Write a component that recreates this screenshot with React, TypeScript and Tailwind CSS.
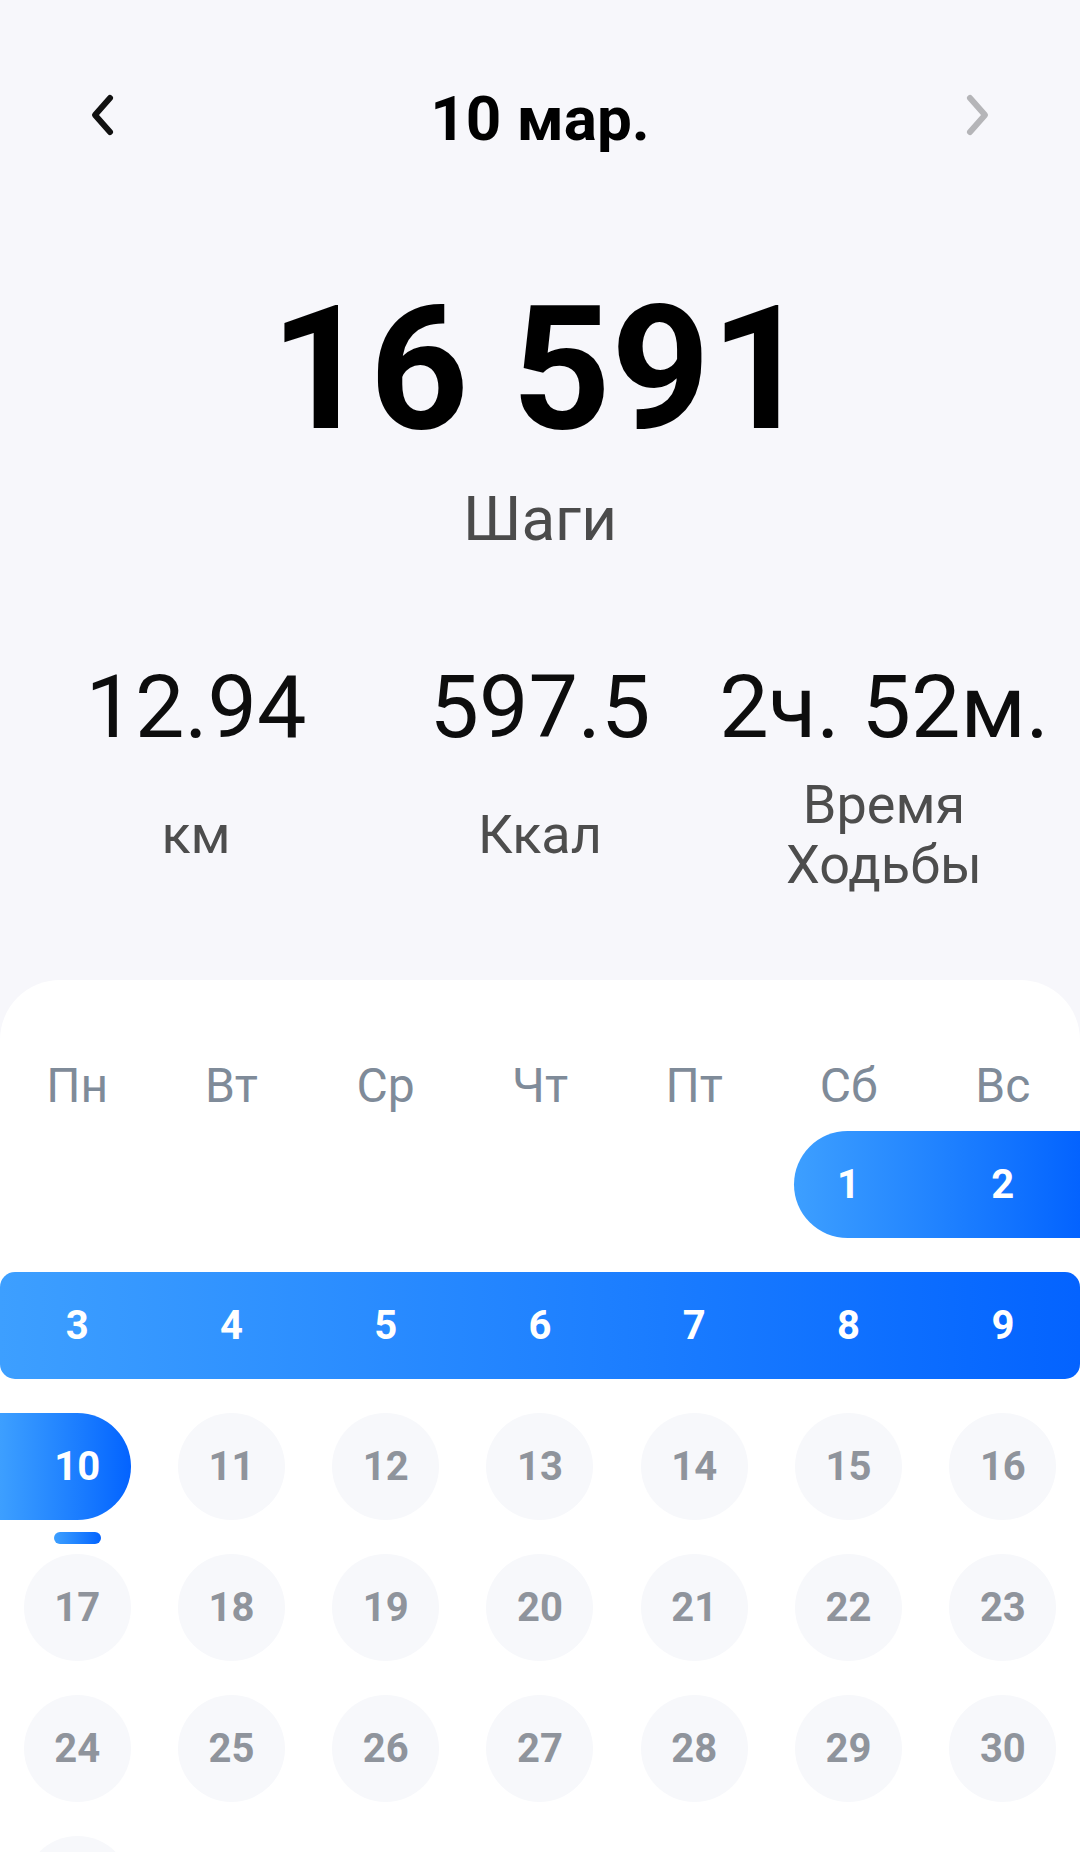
import React from "react";

const weekDays = ["Пн", "Вт", "Ср", "Чт", "Пт", "Сб", "Вс"];

const grad = "bg-gradient-to-r from-[#3d9fff] to-[#0463ff]";

const DayCircle = ({ day }: { day: number }) => (
    <div className="flex items-center justify-center">
        <div className="flex h-[107px] w-[107px] items-center justify-center rounded-full bg-[#f7f8fb] text-[40px] font-bold leading-none text-[#8f949c]">
            {day}
        </div>
    </div>
);

const Stat = ({ value, label }: { value: string; label: React.ReactNode }) => (
    <div className="flex flex-col items-center">
        <div className="whitespace-nowrap text-[88px] leading-none text-[#0d0d0d]">{value}</div>
        <div className="mt-[24px] flex h-[120px] items-center justify-center text-center text-[54px] leading-[60px] text-[#4d4d4d]">
            {label}
        </div>
    </div>
);

const App = () => {
    const range = (a: number, b: number) => Array.from({ length: b - a + 1 }, (_, i) => a + i);

    return (
        <div className="h-[1852px] w-[1080px] overflow-hidden bg-[#f7f7fb] font-['Roboto',sans-serif]">
            {/* Header */}
            <div className="flex items-start justify-between px-[88px] pt-[88px]">
                <svg className="mt-[4px]" width="30" height="46" viewBox="0 0 30 46" fill="none">
                    <path d="M22 6 L7 23 L22 40" stroke="#111" strokeWidth="6" strokeLinecap="round" strokeLinejoin="round" />
                </svg>
                <div className="h-[62px] text-[62px] font-bold leading-none text-black">10 мар.</div>
                <svg className="mt-[4px]" width="30" height="46" viewBox="0 0 30 46" fill="none">
                    <path d="M8 6 L23 23 L8 40" stroke="#b5b5b8" strokeWidth="6" strokeLinecap="round" strokeLinejoin="round" />
                </svg>
            </div>

            {/* Steps */}
            <div className="mt-[133px] text-center text-[173px] font-bold leading-none text-black">16 591</div>
            <div className="mt-[32px] text-center text-[62px] leading-none text-[#4b4b4b]">Шаги</div>

            {/* Stats */}
            <div className="mt-[113px] grid grid-cols-3 px-[24px]">
                <Stat value="12.94" label="км" />
                <Stat value="597.5" label="Ккал" />
                <Stat
                    value="2ч. 52м."
                    label={
                        <span>
                            Время
                            <br />
                            Ходьбы
                        </span>
                    }
                />
            </div>

            {/* Calendar card */}
            <div className="mt-[85px] h-[900px] rounded-t-[60px] bg-white pt-[82px]">
                <div className="grid grid-cols-7 text-center text-[48px] leading-none text-[#7f8b99]">
                    {weekDays.map((d) => (
                        <div key={d}>{d}</div>
                    ))}
                </div>

                <div className="mt-[21px] flex flex-col gap-[34px]">
                    {/* Row 1 */}
                    <div className="grid h-[107px] grid-cols-7">
                        <div className="col-span-2 col-start-6 pl-[23px]">
                            <div className={`flex h-full rounded-l-full rounded-r-[15px] ${grad} text-[40px] font-bold leading-none text-white`}>
                                <span className="flex w-[108px] items-center justify-center">1</span>
                                <span className="flex flex-1 items-center justify-center pl-[23px]">2</span>
                            </div>
                        </div>
                    </div>

                    {/* Row 2 */}
                    <div className={`grid h-[107px] grid-cols-7 rounded-[15px] ${grad} text-[40px] font-bold leading-none text-white`}>
                        {range(3, 9).map((d) => (
                            <span key={d} className="flex items-center justify-center">
                                {d}
                            </span>
                        ))}
                    </div>

                    {/* Row 3 */}
                    <div className="grid h-[107px] grid-cols-7 grid-rows-[107px] items-start">
                        <div className="flex flex-col items-center">
                            <div className="w-full pr-[23px]">
                                <div className={`flex h-[107px] items-center justify-center rounded-l-[15px] rounded-r-full pl-[23px] ${grad} text-[40px] font-bold leading-none text-white`}>
                                    10
                                </div>
                            </div>
                            <div className={`mt-[12px] h-[12px] w-[47px] rounded-full ${grad}`} />
                        </div>
                        {range(11, 16).map((d) => (
                            <DayCircle key={d} day={d} />
                        ))}
                    </div>

                    {/* Row 4 */}
                    <div className="grid h-[107px] grid-cols-7">
                        {range(17, 23).map((d) => (
                            <DayCircle key={d} day={d} />
                        ))}
                    </div>

                    {/* Row 5 */}
                    <div className="grid h-[107px] grid-cols-7">
                        {range(24, 30).map((d) => (
                            <DayCircle key={d} day={d} />
                        ))}
                    </div>

                    {/* Row 6 */}
                    <div className="grid h-[107px] grid-cols-7">
                        <DayCircle day={31} />
                    </div>
                </div>
            </div>
        </div>
    );
};

export default App;
